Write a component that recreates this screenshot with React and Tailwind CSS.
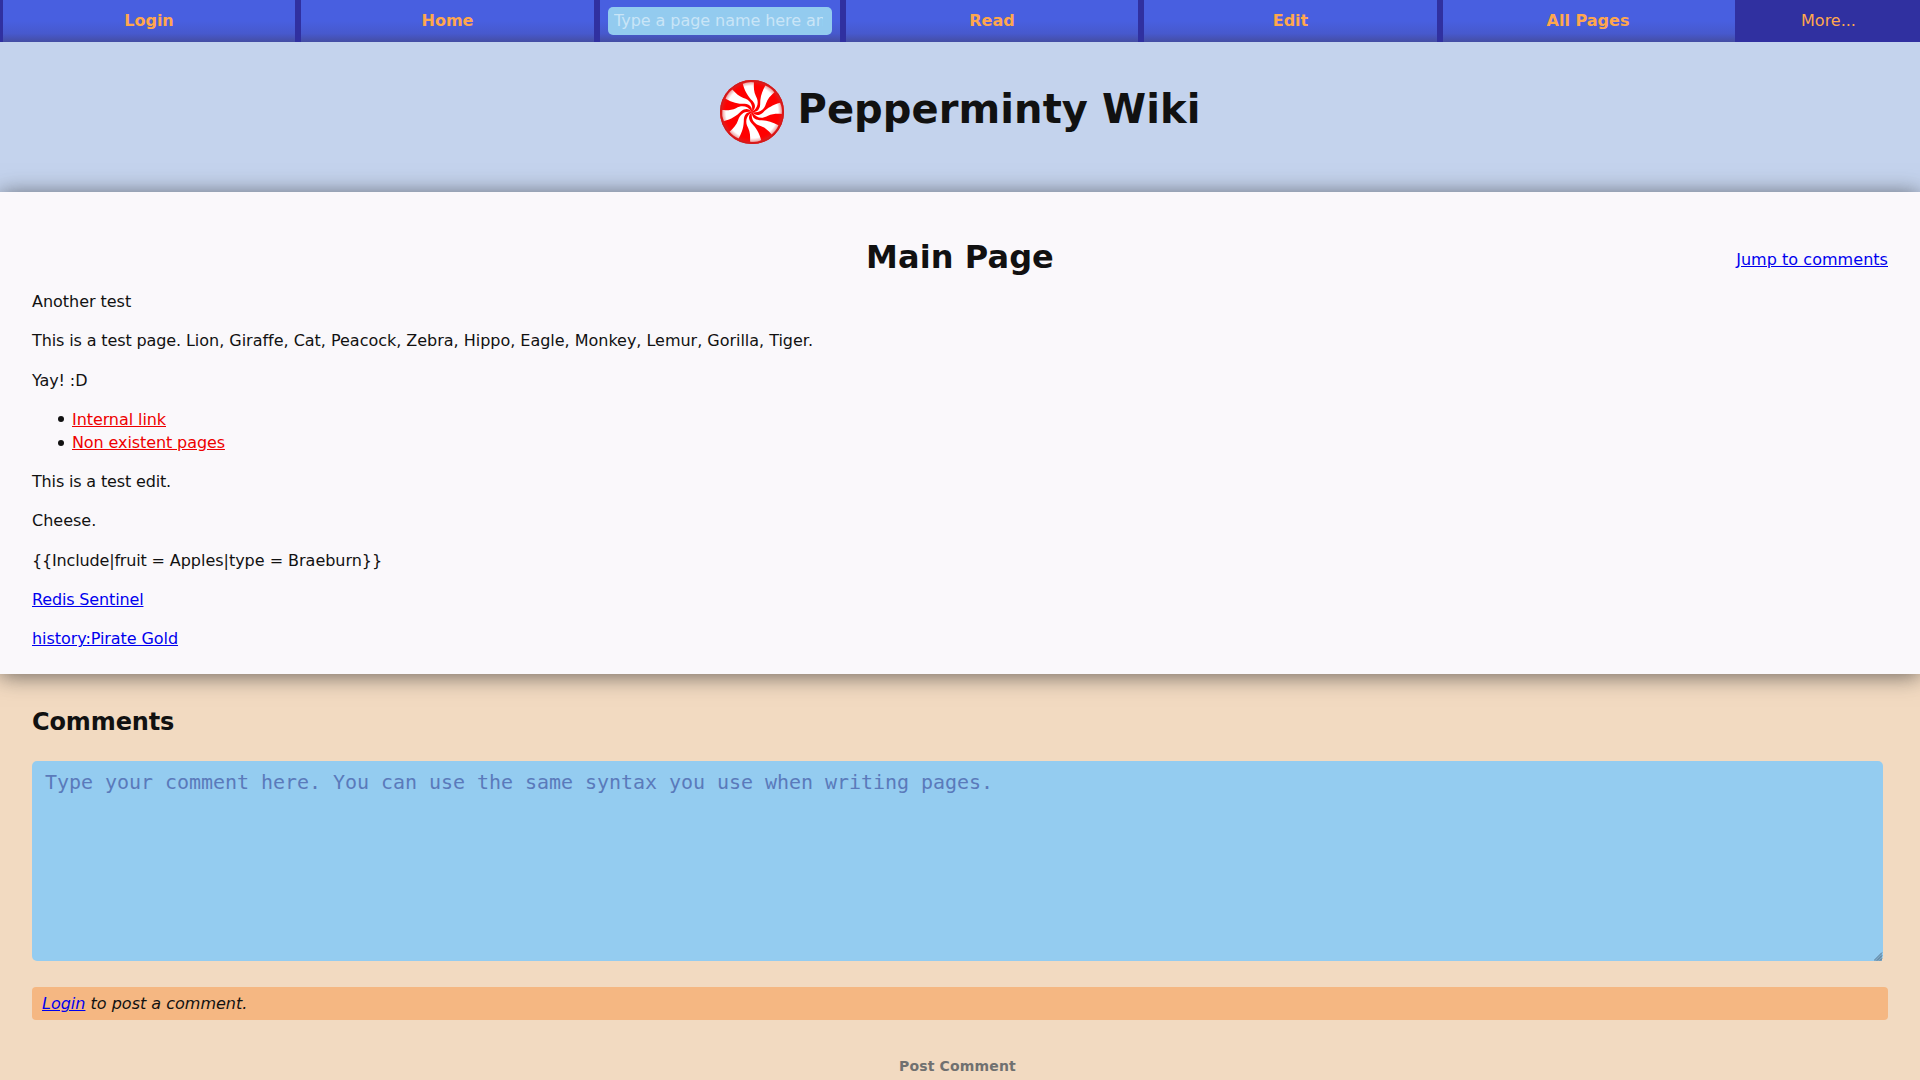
import React from "react";

const STRIPE =
  "M50 50 C56 45 56 39 51 33 C43 25 39 18 35.5 6 Q44 2 53 3.5 C52.5 12 53 19 56 25 C61 34 60 43 50 50 Z";

function Peppermint() {
  return (
    <svg viewBox="0 0 100 100" className="h-16 w-16 shrink-0">
      <defs>
        <radialGradient id="rim">
          <stop offset="0.83" stopColor="#d42020" stopOpacity="0" />
          <stop offset="0.93" stopColor="#d42a2a" stopOpacity="0.35" />
          <stop offset="1" stopColor="#d42020" stopOpacity="0.95" />
        </radialGradient>
      </defs>
      <circle cx="50" cy="50" r="50" fill="#ff0000" />
      {[0, 45, 90, 135, 180, 225, 270, 315].map((a) => (
        <path key={a} d={STRIPE} fill="#fff" transform={`rotate(${a} 50 50)`} />
      ))}
      <circle cx="50" cy="50" r="49" fill="url(#rim)" />
      <circle cx="50" cy="50" r="49" fill="none" stroke="#d01c1c" strokeWidth="2" />
    </svg>
  );
}

const cell =
  "flex h-[42px] items-center justify-center font-bold text-[#ffa74d] bg-linear-to-b from-[#485fe0] from-50% via-[#4759cd] via-80% to-[#444da3]";

function Item({ children, className }) {
  return (
    <li className="flex items-center">
      <span className="mr-[8.5px] h-1.5 w-1.5 rounded-full bg-[#111111]" />
      <a className={className}>{children}</a>
    </li>
  );
}

export default function App() {
  return (
    <div className="flex h-[1080px] flex-col overflow-hidden bg-[#f2dac1] font-['DejaVu_Sans',sans-serif] text-base leading-[23.25px] text-[#111111]">
      <nav className="grid h-[42px] shrink-0 grid-cols-[292px_293px_240px_292px_293px_292px_185px] gap-x-[6px] bg-[#3030a0] pl-[3px] [&>*:last-child]:-ml-[6px]">
        <a className={cell + " pb-px"}>Login</a>
        <a className={cell + " pb-px"}>Home</a>
        <div className={cell}>
          <input
            placeholder="Type a page name here and hit enter"
            className="h-7 w-56 rounded-[5px] bg-[#93cbef] pr-[9px] pb-0.5 pl-1.5 font-normal tracking-[-0.06px] placeholder:text-[#c9e5f7]"
          />
        </div>
        <a className={cell + " pb-px"}>Read</a>
        <a className={cell + " pb-px"}>Edit</a>
        <a className={cell + " pr-0.5 pb-px"}>All Pages</a>
        <span className="flex items-center justify-center pr-1 pb-px text-[#ffa74d]">More...</span>
      </nav>

      <header className="flex h-[150px] shrink-0 justify-center bg-[#c4d3ed] pt-[38px]">
        <Peppermint />
        <h1 className="ml-[14px] mt-1.5 text-[40px] leading-[47px] font-bold tracking-[0.08px]">Pepperminty Wiki</h1>
      </header>

      <main className="relative h-[482px] shrink-0 bg-[#faf8fb] px-8 pt-[46px] shadow-[0_2px_21px_0_rgba(50,50,50,0.7)]">
        <div className="grid grid-cols-[1fr_auto_1fr] items-baseline">
          <h2 className="col-start-2 text-[32px] leading-[38px] font-bold tracking-[0.08px]">Main Page</h2>
          <a className="relative bottom-[3px] justify-self-end tracking-[0.04px] text-[#0000ee] underline">Jump to comments</a>
        </div>
        <div className="mt-[14px] space-y-4">
          <p className="tracking-[-0.03px]">Another test</p>
          <p>
            <span className="tracking-[-0.12px]">This is a test page. </span>
            <span className="tracking-[-0.02px]">Lion, Giraffe, Cat, Peacock, Zebra, Hippo, Eagle, Monkey, Lemur, Gorilla, Tiger.</span>
          </p>
          <p className="tracking-[-0.1px]">Yay! :D</p>
          <ul className="pl-[25.5px]">
            <Item className="tracking-[-0.08px] text-[#ee0000] underline">Internal link</Item>
            <Item className="tracking-[-0.1px] text-[#ee0000] underline">Non existent pages</Item>
          </ul>
          <p className="tracking-[-0.16px]">This is a test edit.</p>
          <p className="relative -top-px">Cheese.</p>
          <p>
            <span className="tracking-[-0.16px]">{"{{Include|fruit = "}</span>
            <span className="tracking-[-0.02px]">{"Apples|type = Braeburn}}"}</span>
          </p>
          <p><a className="tracking-[-0.15px] text-[#0000ee] underline">Redis Sentinel</a></p>
          <p><a className="tracking-[-0.07px] text-[#0000ee] underline">history:Pirate Gold</a></p>
        </div>
      </main>

      <section className="px-8 pt-[34px]">
        <h2 className="text-2xl leading-[28px] font-bold tracking-[-0.12px]">Comments</h2>
        <div className="relative mt-[25px] h-[200px] w-[1851px]">
          <textarea
            placeholder="Type your comment here. You can use the same syntax you use when writing pages."
            className="block h-full w-full resize-none rounded-[5px] bg-[#94ccf0] px-[13px] py-[9px] font-['DejaVu_Sans_Mono',monospace] text-xl leading-6 tracking-[-0.041px] placeholder:text-[#5a7abb]"
          />
          <svg viewBox="0 0 9 9" className="absolute right-0 bottom-0 h-[9px] w-[9px]">
            <path d="M0 9 L8 1 V9 Z" fill="#7fa9c6" />
            <path d="M0 8.5 L8 0.5 M3 8.5 L8 3.5 M6 8.5 L8 6.5" stroke="#50718a" strokeWidth="0.9" />
          </svg>
        </div>
        <div className="mt-[26px] h-[33px] rounded-[4px] bg-[#f5b782] px-2.5 pt-[5px] italic">
          <a className="text-[#0000ee] underline">Login</a> to post a comment.
        </div>
        <div className="mt-[35px] pr-[5px] text-center text-sm leading-[23px] font-bold tracking-[0.15px] text-[#707070]">Post Comment</div>
      </section>
    </div>
  );
}
